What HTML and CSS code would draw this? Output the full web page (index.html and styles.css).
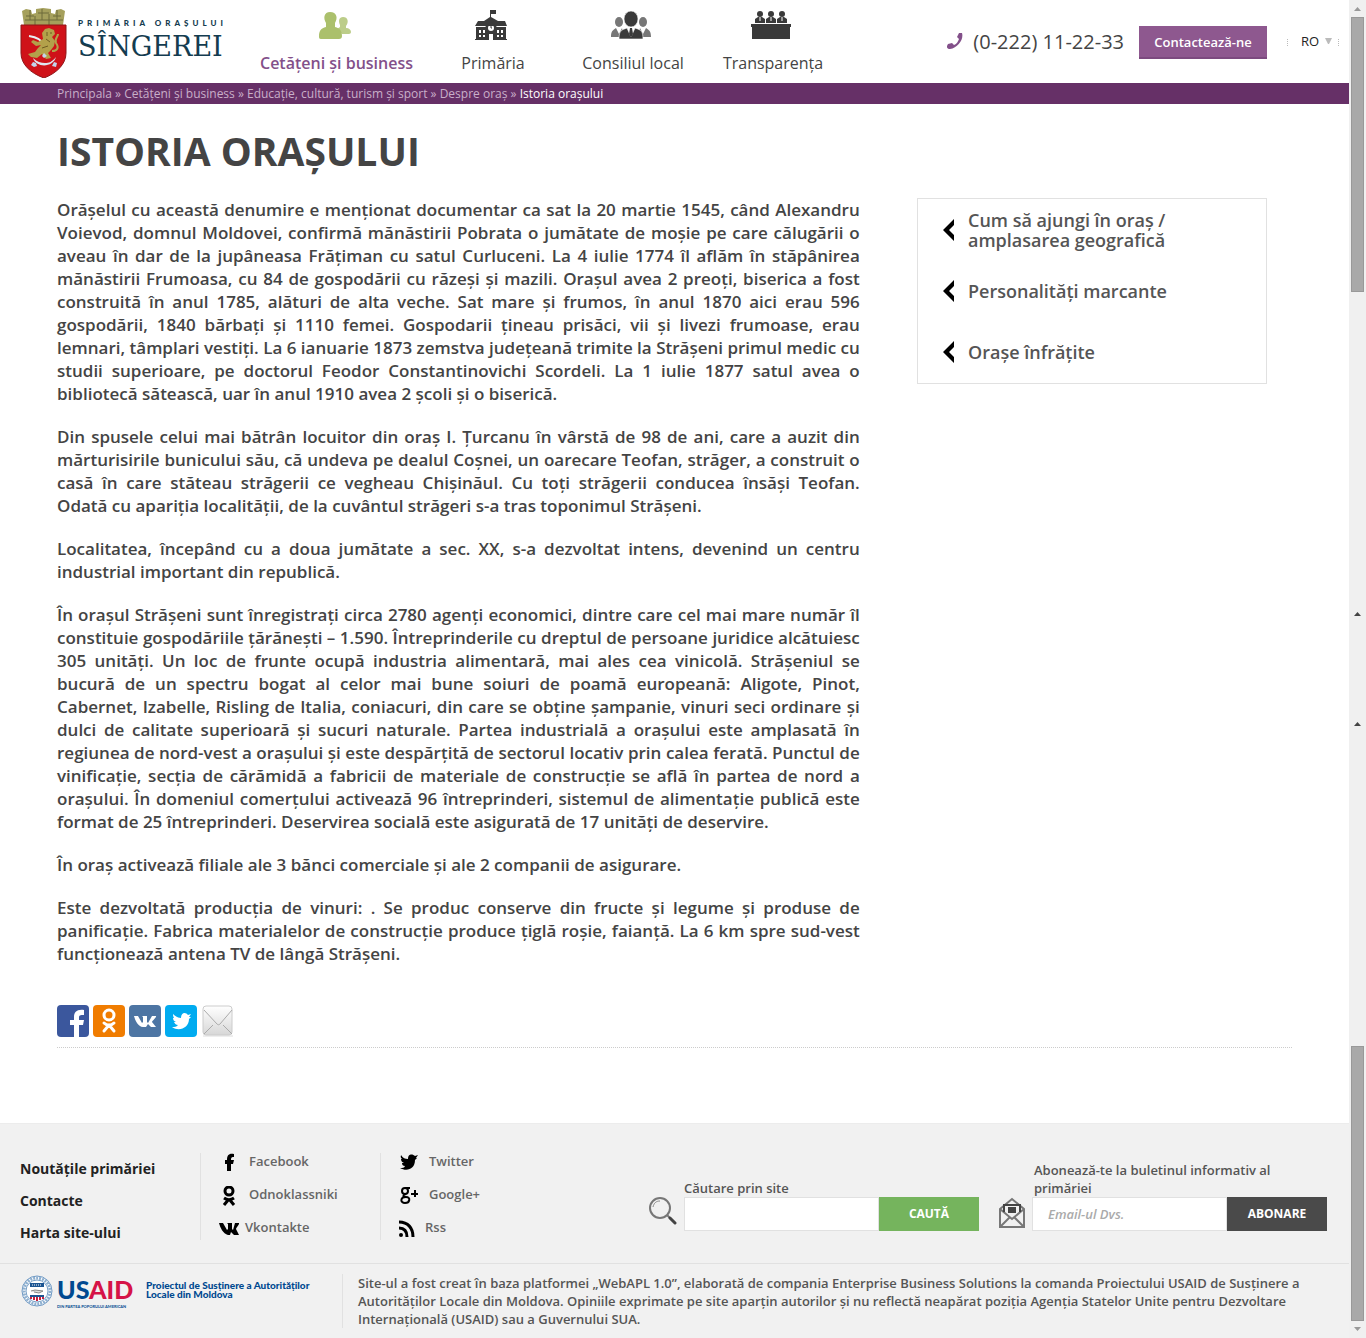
FILE: index.html
```html
<!DOCTYPE html>
<html lang="ro">
<head>
<meta charset="utf-8">
<meta name="viewport" content="width=device-width, initial-scale=1">
<title>Istoria orașului</title>
<link rel="stylesheet" href="styles.css">
</head>
<body>
<div class="page">
  <header class="header">
    <a class="logo" href="#">
      <svg class="crest" viewBox="0 0 48 70" width="48" height="70" aria-hidden="true">
        <path d="M4 17 2 3l4-2 5 1 1 4 4-1V1l7-1 8 1v4l4 1 1-4 5-1 4 2-2 14z" fill="#a5a05c"/>
        <path d="M6 8h8M18 5h11M33 8h8M5 12h38M10 2v10M22 1v11M37 2v10M15 8v9M29 6v11" stroke="#6d6a3a" stroke-width="1" fill="none"/>
        <path d="M1 17h45v28c0 11-9 20-22 25C10 65 1 56 1 45z" fill="#cf1219" stroke="#8f1519"/>
        <path d="M9 28c7 1 13 4 15 9" stroke="#e8edf2" stroke-width="2" fill="none"/>
        <path d="M25 21l4-1 5 2 1 4-3 3 3 4-1 5-3 4-3 3 3 5-5 1-4-5-5 4-6-1-3-3 7-2 3-4 3-3-5 1-5-4 2-2 5 2 5-3-1-6z" fill="#b3a14a"/>
        <path d="M32 43c6 0 7-4 4-8-2-4 2-6 2-9" stroke="#b3a14a" stroke-width="2" fill="none"/>
        <path d="M30 25h2M26 31l4 3M22 40l6-2M27 24v4" stroke="#6e5c22" fill="none"/>
        <path d="M13 50c3 10 20 10 23-1-4 5-7 6-11 6s-8-1-12-5z" fill="#dfe6ef"/>
        <path d="M22 48l2-3 3 3-3 2zM13 54l3 1 1 3-3 1-3-2zM34 54l3 1-1 4-4-1z" fill="#c3d5ea"/>
      </svg>
      <span class="logo-text"><span class="logo-small">PRIMĂRIA ORAȘULUI</span><span class="logo-name">SÎNGEREI</span></span>
    </a>
    <nav class="nav">
      <a class="nav-item nav-item-active" href="#">
        <svg width="32" height="32" viewBox="0 0 32 32" fill="#abc06c" aria-hidden="true"><path opacity=".8" d="M24 7c5 0 6 5 3 9v2c3 0 5 2 5 4 0 1-1 2-2 2h-7l-5-5 3-2v-2c-2-4-1-8 3-8z"/><path d="M11 2c7 0 8 6 5 11v4c5 1 7 4 7 9 0 2-1 3-3 3H2c-2 0-2-1-2-3 0-5 2-8 7-9v-4C4 8 5 2 11 2z"/></svg>
        <span>Cetățeni și business</span>
      </a>
      <a class="nav-item" href="#">
        <svg width="32" height="32" viewBox="4 0 32 32" fill="#3a3a3a" aria-hidden="true"><path d="M19 0h6v4h-5v3l7 4h7l2 5H4l3-5h6l6-4z"/><path fill-rule="evenodd" d="M5 17h9l6-5 6 5h9v12h1v1H4v-1h1zm3 3v3h2v-3zm4 0v3h2v-3zm14 0v3h2v-3zm4 0v3h2v-3zM8 25v2h2v-2zm4 0v2h2v-2zm14 0v2h2v-2zm4 0v2h2v-2zM18 24v6h4v-6zm2-9a3 3 0 1 0 0 6 3 3 0 0 0 0-6z"/><path d="M20 16v2h1" stroke="#3a3a3a" fill="none"/></svg>
        <span>Primăria</span>
      </a>
      <a class="nav-item" href="#">
        <svg width="40" height="32" viewBox="1 0 40 32" aria-hidden="true"><g fill="#777"><ellipse cx="9" cy="12" rx="4" ry="5"/><ellipse cx="33" cy="12" rx="4" ry="5"/><path d="M1 27c0-6 2-7 5-9l3 6 3-6 2 9zM41 27c0-6-2-7-5-9l-3 6-3-6-2 9z"/></g><g fill="#3a3a3a" stroke="#fff" stroke-width=".6"><ellipse cx="21" cy="9" rx="7" ry="8"/><path d="M9 29c0-9 3-9 8-11l4 9 4-9c6 2 8 3 8 11z"/></g><path d="M18 18h6l-3 9z" fill="#fff"/><path d="M20 18h2l1 6-2 4-2-4z" fill="#3a3a3a"/></svg>
        <span>Consiliul local</span>
      </a>
      <a class="nav-item" href="#">
        <svg width="40" height="32" viewBox="1 0 40 32" fill="#3a3a3a" aria-hidden="true"><circle cx="10" cy="4" r="3"/><circle cx="21" cy="4" r="3"/><circle cx="32" cy="4" r="3"/><path d="M5 13V9l3-2h4l3 2v4zM16 13V9l3-2h4l3 2v4zM27 13V9l3-2h4l3 2v4zM1 14h40v3h-1v12H2V17H1z"/><path d="M10 7v4M21 7v4M32 7v4" stroke="#fff"/></svg>
        <span>Transparența</span>
      </a>
    </nav>
    <div class="header-tools">
      <a class="phone" href="tel:022211223"><svg width="16" height="16" viewBox="0 0 16 16" fill="#83508a" aria-hidden="true"><path d="M12 0h3c2 6-4 15-12 16-3 0-4-2-2-5l4-1 2 2c3-1 4-4 5-6l-2-2z"/></svg><span>(0-222) 11-22-33</span></a>
      <button class="contact" type="button">Contactează-ne</button>
      <label class="language"><select class="language-select" aria-label="Limba"><option>RO</option></select><svg width="7" height="6" viewBox="0 0 7 6" aria-hidden="true"><path d="M0 0h7L4 6H3z" fill="#bbb"/></svg></label>
    </div>
  </header>
  <nav class="breadcrumbs"><a href="#">Principala</a> » <a href="#">Cetățeni și business</a> » <a href="#">Educație, cultură, turism și sport</a> » <a href="#">Despre oraș</a> » <span class="current">Istoria orașului</span></nav>

  <main class="main">
    <h1 class="title">Istoria orașului</h1>
    <div class="columns">
      <article class="article">
        <p>Orășelul cu această denumire e menționat documentar ca sat la 20 martie 1545, când Alexandru Voievod, domnul Moldovei, confirmă mănăstirii Pobrata o jumătate de moșie pe care călugării o aveau în dar de la jupâneasa Frățiman cu satul Curluceni. La 4 iulie 1774 îl aflăm în stăpânirea mănăstirii Frumoasa, cu 84 de gospodării cu răzeși și mazili. Orașul avea 2 preoți, biserica a fost construită în anul 1785, alături de alta veche. Sat mare și frumos, în anul 1870 aici erau 596 gospodării, 1840 bărbați și 1110 femei. Gospodarii țineau prisăci, vii și livezi frumoase, erau lemnari, tâmplari vestiți. La 6 ianuarie 1873 zemstva județeană trimite la Strășeni primul medic cu studii superioare, pe doctorul Feodor Constantinovichi Scordeli. La 1 iulie 1877 satul avea o bibliotecă sătească, uar în anul 1910 avea 2 școli și o biserică.</p>
        <p>Din spusele celui mai bătrân locuitor din oraș I. Țurcanu în vârstă de 98 de ani, care a auzit din mărturisirile bunicului său, că undeva pe dealul Coșnei, un oarecare Teofan, străger, a construit o casă în care stăteau străgerii ce vegheau Chișinăul. Cu toți străgerii conducea însăși Teofan. Odată cu apariția localității, de la cuvântul străgeri s-a tras toponimul Strășeni.</p>
        <p>Localitatea, începând cu a doua jumătate a sec. XX, s-a dezvoltat intens, devenind un centru industrial important din republică.</p>
        <p>În orașul Strășeni sunt înregistrați circa 2780 agenți economici, dintre care cel mai mare număr îl constituie gospodăriile țărănești – 1.590. Întreprinderile cu dreptul de persoane juridice alcătuiesc 305 unități. Un loc de frunte ocupă industria alimentară, mai ales cea vinicolă. Strășeniul se bucură de un spectru bogat al celor mai bune soiuri de poamă europeană: Aligote, Pinot, Cabernet, Izabelle, Risling de Italia, coniacuri, din care se obține șampanie, vinuri seci ordinare și dulci de calitate superioară și sucuri naturale. Partea industrială a orașului este amplasată în regiunea de nord-vest a orașului și este despărțită de sectorul locativ prin calea ferată. Punctul de vinificație, secția de cărămidă a fabricii de materiale de construcție se află în partea de nord a orașului. În domeniul comerțului activează 96 întreprinderi, sistemul de alimentație publică este format de 25 întreprinderi. Deservirea socială este asigurată de 17 unități de deservire.</p>
        <p>În oraș activează filiale ale 3 bănci comerciale și ale 2 companii de asigurare.</p>
        <p>Este dezvoltată producția de vinuri: . Se produc conserve din fructe și legume și produse de panificație. Fabrica materialelor de construcție produce țiglă roșie, faianță. La 6 km spre sud-vest funcționează antena TV de lângă Strășeni.</p>
      </article>
      <aside class="related">
        <a href="#"><svg width="12" height="22" viewBox="0 0 12 22" aria-hidden="true"><path d="M11 0v6l-5 5 5 5v6L0 11z"/></svg><span>Cum să ajungi în oraș / amplasarea geografică</span></a>
        <a href="#"><svg width="12" height="22" viewBox="0 0 12 22" aria-hidden="true"><path d="M11 0v6l-5 5 5 5v6L0 11z"/></svg><span>Personalități marcante</span></a>
        <a href="#"><svg width="12" height="22" viewBox="0 0 12 22" aria-hidden="true"><path d="M11 0v6l-5 5 5 5v6L0 11z"/></svg><span>Orașe înfrățite</span></a>
      </aside>
    </div>
    <div class="share">
      <a href="#" aria-label="Facebook"><svg width="32" height="32" viewBox="0 0 32 32"><rect width="32" height="32" rx="4" fill="#3b579d"/><path d="M17 32V20h-4v-5h4v-3c0-5 3-8 10-7v5c-4 0-5 0-5 3v2h5l-1 5h-4v12z" fill="#fff"/></svg></a>
      <a href="#" aria-label="Odnoklassniki"><svg width="32" height="32" viewBox="0 0 32 32"><rect width="32" height="32" rx="4" fill="#f07c00"/><g fill="none" stroke="#fff" stroke-width="3" stroke-linecap="round"><circle cx="16" cy="10" r="5"/><path d="M11 18c3 3 7 3 10 0M16 20l-5 6M16 20l5 6"/></g></svg></a>
      <a href="#" aria-label="Vkontakte"><svg width="32" height="32" viewBox="0 0 32 32"><rect width="32" height="32" rx="4" fill="#4d75a3"/><path d="M5 11h4l4 7 1-1v-5l-1-1h5v6l1 1 4-7h4c1 1-4 5-4 6l4 5h-5l-3-3-2 3h-3C9 22 6 15 5 11z" fill="#fff"/></svg></a>
      <a href="#" aria-label="Twitter"><svg width="32" height="32" viewBox="0 0 32 32"><rect width="32" height="32" rx="4" fill="#00abf0"/><path d="M7 22c3 0 4 0 6-2-2 0-3-1-4-3h2c-2-1-3-2-3-4h1c-1-2-1-3-1-4 2 2 5 4 8 4 0-6 5-6 7-3l3-1-2 3h2l-2 2c0 9-10 13-17 8z" fill="#fff"/></svg></a>
      <a href="#" aria-label="Email"><svg width="34" height="32" viewBox="0 0 34 32"><defs><linearGradient id="mail" x2="0" y2="1"><stop stop-color="#fff"/><stop offset="1" stop-color="#d7d7d7"/></linearGradient></defs><path d="M2 30h30v2H2z" fill="#eee"/><rect x="2" y="1" width="29" height="29" rx="3" fill="url(#mail)" stroke="#ccc"/><path d="M3 5l13 14c1 1 2 1 3 0L31 5M3 29l9-9M31 29l-9-9" fill="none" stroke="#aaa"/></svg></a>
    </div>
  </main>

  <footer class="footer">
    <div class="footer-top">
      <nav class="footer-links"><a href="#">Noutățile primăriei</a><a href="#">Contacte</a><a href="#">Harta site-ului</a></nav>
      <nav class="social">
        <a href="#"><svg width="20" height="20" viewBox="0 0 20 20"><path d="M8 18v-7H6V7h2c0-5 2-7 7-6v3c-2 0-3 0-3 3h3l-1 4h-2v7z"/></svg>Facebook</a>
        <a href="#"><svg width="20" height="20" viewBox="0 0 20 20" fill="none" stroke="#000" stroke-width="3"><circle cx="10" cy="5" r="4"/><path d="M5 12c3 2 7 2 10 0M10 13l-5 6M10 13l5 6"/></svg>Odnoklassniki</a>
        <a class="wide" href="#"><svg width="20" height="20" viewBox="0 0 20 20"><path d="M0 4h4l4 7 1-1V5L8 4h5v6l1 1 2-7h4c1 1-3 5-3 6l3 6h-5l-3-3-1 3H9C4 15 1 8 0 4z"/></svg>Vkontakte</a>
      </nav>
      <nav class="social">
        <a href="#"><svg width="20" height="20" viewBox="0 0 20 20"><path d="M1 15c3 0 4 0 5-2-2 0-3-1-3-3h2c-2-1-3-2-3-4h1C1 4 2 3 2 2c2 3 4 4 7 4 0-6 5-5 7-3l3-1-2 3h1l-2 2c0 9-8 12-15 8z"/></svg>Twitter</a>
        <a href="#"><svg width="20" height="20" viewBox="0 0 20 20" fill="none" stroke="#000" stroke-width="2"><circle cx="6" cy="5" r="3"/><path d="M11 2H6M7 8c-3 1-4 3 0 3 5 0 4 6-1 6s-5-6 1-6M12 8h7M16 4v7"/></svg>Google+</a>
        <a class="wide" href="#"><svg width="20" height="20" viewBox="0 0 20 20"><circle cx="2" cy="16" r="2"/><path d="M0 9c5 0 8 3 8 9M0 3c9 0 14 6 14 15" fill="none" stroke="#000" stroke-width="3"/></svg>Rss</a>
      </nav>
      <form class="footer-form search-form">
        <svg class="form-icon" width="28" height="34" viewBox="0 0 28 34" fill="none" aria-hidden="true"><circle cx="11" cy="11" r="10" stroke="#777" stroke-width="2"/><path d="M4 10c1-4 3-6 7-6" stroke="#888"/><path d="M18 18l3 3" stroke="#777" stroke-width="2"/><path d="M21 21l5 5" stroke="#444" stroke-width="3" stroke-linecap="round"/></svg>
        <div class="field"><label for="search">Căutare prin site</label><div class="field-row"><input id="search" type="text"><button class="search-button" type="button">CAUTĂ</button></div></div>
      </form>
      <form class="footer-form">
        <svg class="form-icon" width="26" height="34" viewBox="0 0 26 34" fill="none" stroke="#777" stroke-width="2" aria-hidden="true"><path d="M1 12 13 2l12 10v18H1zM1 12l12 10 12-10M2 29l9-9M24 29l-9-9"/><path d="M5 15V8h16v7" stroke="#444"/><path d="M9 10h8v6H9z" fill="#444" stroke="none"/></svg>
        <div class="field"><label class="subscribe-label" for="email">Abonează-te la buletinul informativ al primăriei</label><div class="field-row"><input id="email" type="email" placeholder="Email-ul Dvs."><button class="subscribe-button" type="button">ABONARE</button></div></div>
      </form>
    </div>
    <div class="footer-bottom">
      <a class="usaid" href="#">
        <svg width="34" height="34" viewBox="0 0 34 34" aria-hidden="true"><circle cx="17" cy="17" r="15" fill="#fff" stroke="#6b96c2"/><circle cx="17" cy="17" r="13" fill="none" stroke="#8fb0d0" stroke-width="3" stroke-dasharray="2 1"/><circle cx="17" cy="17" r="11" fill="#fff" stroke="#79a0c7"/><path d="M10 9h14v4H10z" fill="#1c5592"/><path d="M12 11h10" stroke="#fff" stroke-dasharray="1 1"/><path d="M11 17l4-1 8 1-4 2-5-1" fill="#ddd" stroke="#888"/><path d="M10 21h14v2H10z" fill="#1c5592"/><path d="M11 23v2M14 23v3M17 23v4M20 23v3M23 23v2" stroke="#c8203f" stroke-width="2"/></svg>
        <span class="usaid-mark"><span class="usaid-name">US<span class="usaid-red">AID</span></span><span class="usaid-tag">DIN PARTEA POPORULUI AMERICAN</span></span>
        <span class="usaid-project">Proiectul de Susținere a Autorităților Locale din Moldova</span>
      </a>
      <p class="credits">Site-ul a fost creat în baza platformei „WebAPL 1.0”, elaborată de compania Enterprise Business Solutions la comanda Proiectului USAID de Susținere a Autorităților Locale din Moldova. Opiniile exprimate pe site aparțin autorilor și nu reflectă neapărat poziția Agenţia Statelor Unite pentru Dezvoltare Internaţională (USAID) sau a Guvernului SUA.</p>
    </div>
  </footer>
</div>
<div class="rail" aria-hidden="true">
  <div class="rail-part"><i class="arrow arrow-up pale"></i><i class="thumb"></i></div>
  <div class="rail-middle"><i class="arrow arrow-up"></i><i class="arrow arrow-up"></i></div>
  <div class="rail-part"><i class="thumb"></i><i class="arrow arrow-down pale"></i></div>
</div>
</body>
</html>
```
FILE: styles.css
```css
* { box-sizing: border-box; }
body {
  margin: 0;
  display: flex;
  min-height: 100vh;
  font-family: "Open Sans", "Noto Sans", sans-serif;
  font-size: 13px;
  color: #444;
  background: #fff;
}
a { color: inherit; text-decoration: none; }
svg { display: block; flex: none; }
p { margin: 0; }
button, input, select { font: inherit; border: 0; border-radius: 0; margin: 0; padding: 0; }

.page { flex: 1; min-width: 0; display: flex; flex-direction: column; }

/* Header */
.header { display: flex; height: 83px; padding: 0 10px 0 20px; }
.logo { display: flex; gap: 10px; width: 210px; padding-top: 8px; color: #143c50; }
.logo-text { display: flex; flex-direction: column; padding-top: 10px; white-space: nowrap; }
.logo-small { font-family: Lato, sans-serif; font-size: 8px; line-height: 11px; font-weight: 900; letter-spacing: 4px; }
.logo-name { font-family: "DejaVu Serif", serif; font-size: 27px; line-height: 36px; }
.nav { display: flex; margin-left: 20px; padding-top: 10px; }
.nav svg { margin-right: 4px; }
.nav-item { display: flex; flex-direction: column; align-items: center; gap: 10px; min-width: 140px; font-size: 16px; line-height: 22px; font-weight: 400; color: #444; white-space: nowrap; }
.nav-item-active { padding: 0 10px; font-weight: 600; color: #83508a; }
.header-tools { display: flex; align-items: center; height: 85px; margin-left: auto; }
.phone { display: flex; align-items: center; gap: 10px; padding-bottom: 3px; font-size: 20px; color: #444; white-space: nowrap; }
.contact { width: 128px; height: 33px; margin-left: 15px; border-bottom: 2px solid #7c4a7f; background: #8e588f; color: #fff; font-size: 13px; font-weight: 600; }
.language { display: flex; align-items: center; gap: 4px; height: 26px; margin-left: 20px; padding: 0 7px 3px 14px; color: #222; background: repeating-linear-gradient(#bbb 0 1px, transparent 1px 2px) left center / 1px 7px no-repeat, repeating-linear-gradient(#bbb 0 1px, transparent 1px 2px) right center / 1px 7px no-repeat; }
.language-select { appearance: none; width: 20px; background: none; color: #222; }

.breadcrumbs { padding: 0 57px; font-size: 12px; line-height: 21px; background: #663067; color: #c9afc9; }
.current { color: #fff; }

/* Content */
.main { padding: 21px 57px 74px; }
.title { margin: 0; font-size: 39px; line-height: 52px; font-weight: 700; text-transform: uppercase; color: #444; }
.columns { display: flex; align-items: flex-start; padding-top: 21px; }
.article { display: flex; flex-direction: column; gap: 20px; width: 65%; font-size: 17px; line-height: 23px; font-weight: 600; text-align: justify; }
.related { display: flex; flex-direction: column; gap: 20px; width: 350px; margin: 0 25px 0 auto; padding: 10px 25px 11px; border: 1px solid #e1e1e1; font-size: 18px; line-height: 20px; font-weight: 600; color: #555; }
.related a { display: flex; align-items: center; gap: 13px; min-height: 41px; padding-right: 40px; }
.share { display: flex; gap: 4px; margin-top: 40px; padding-bottom: 10px; border-bottom: 1px dotted #ccc; }

/* Footer */
.footer { margin-top: auto; background: #f1f1f1; border-top: 1px solid #ececec; font-weight: 600; color: #555; }
.footer-top { display: flex; height: 140px; padding: 29px 22px 0 20px; border-bottom: 1px solid #e1e1e1; }
.footer-links { display: flex; flex-direction: column; gap: 12px; width: 180px; padding-top: 6px; font-size: 14px; line-height: 20px; font-weight: 700; color: #222; }
.social { display: flex; flex-direction: column; gap: 13px; width: 180px; height: 87px; padding-left: 18px; border-left: 1px solid #e1e1e1; color: #666; }
.social a { display: flex; gap: 10px; height: 20px; line-height: 16px; }
.social .wide { gap: 6px; }
.footer-form { display: flex; align-items: flex-end; height: 78px; }
.search-form { margin: 0 20px 0 auto; }
.form-icon { margin-right: 7px; }
.field { width: 295px; line-height: 18px; }
.field label { display: block; }
.field .subscribe-label { padding: 0 40px 0 2px; }
.field-row { display: flex; height: 34px; }
.field input { flex: 1; min-width: 0; padding: 0 15px; border: 1px solid #e1e1e1; background: #fff; }
.field input::placeholder { color: #aaa; font-style: italic; opacity: 1; }
.field button { width: 100px; color: #fff; font-size: 12px; font-weight: 700; }
.search-button { background: #75b45d; }
.subscribe-button { background: #4a4a4a; }
.footer-bottom { display: flex; padding: 10px 40px 10px 20px; }
.usaid { display: flex; width: 322px; gap: 3px; color: #004990; font-family: Lato, sans-serif; }
.usaid-mark { display: flex; flex-direction: column; width: 76px; white-space: nowrap; }
.usaid-name { font-family: Lato, sans-serif; font-weight: 900; font-size: 25px; line-height: 30px; }
.usaid-red { color: #d51347; }
.usaid-tag { font-size: 4px; line-height: 5px; font-weight: 700; }
.usaid-project { width: 180px; padding: 7px 0 0 10px; font-size: 10px; line-height: 9px; font-weight: 900; }
.credits { flex: 1; min-height: 54px; padding-left: 15px; border-left: 1px solid #e1e1e1; line-height: 18px; }

/* Scroll rail */
.rail { display: flex; flex-direction: column; justify-content: space-between; width: 17px; background: #f0f0f0; }
.rail-part, .rail-middle { display: flex; flex-direction: column; align-items: center; }
.rail-part { gap: 6px; padding: 7px 0; }
.rail-middle { gap: 106px; }
.thumb { width: 13px; height: 275px; background: #a9a9a9; border: 1px solid #999; }
.arrow { width: 7px; height: 4px; background: #444; }
.arrow-up { clip-path: polygon(50% 0, 100% 100%, 0 100%); }
.arrow-down { clip-path: polygon(0 0, 100% 0, 50% 100%); }
.pale { background: #999; }
```
